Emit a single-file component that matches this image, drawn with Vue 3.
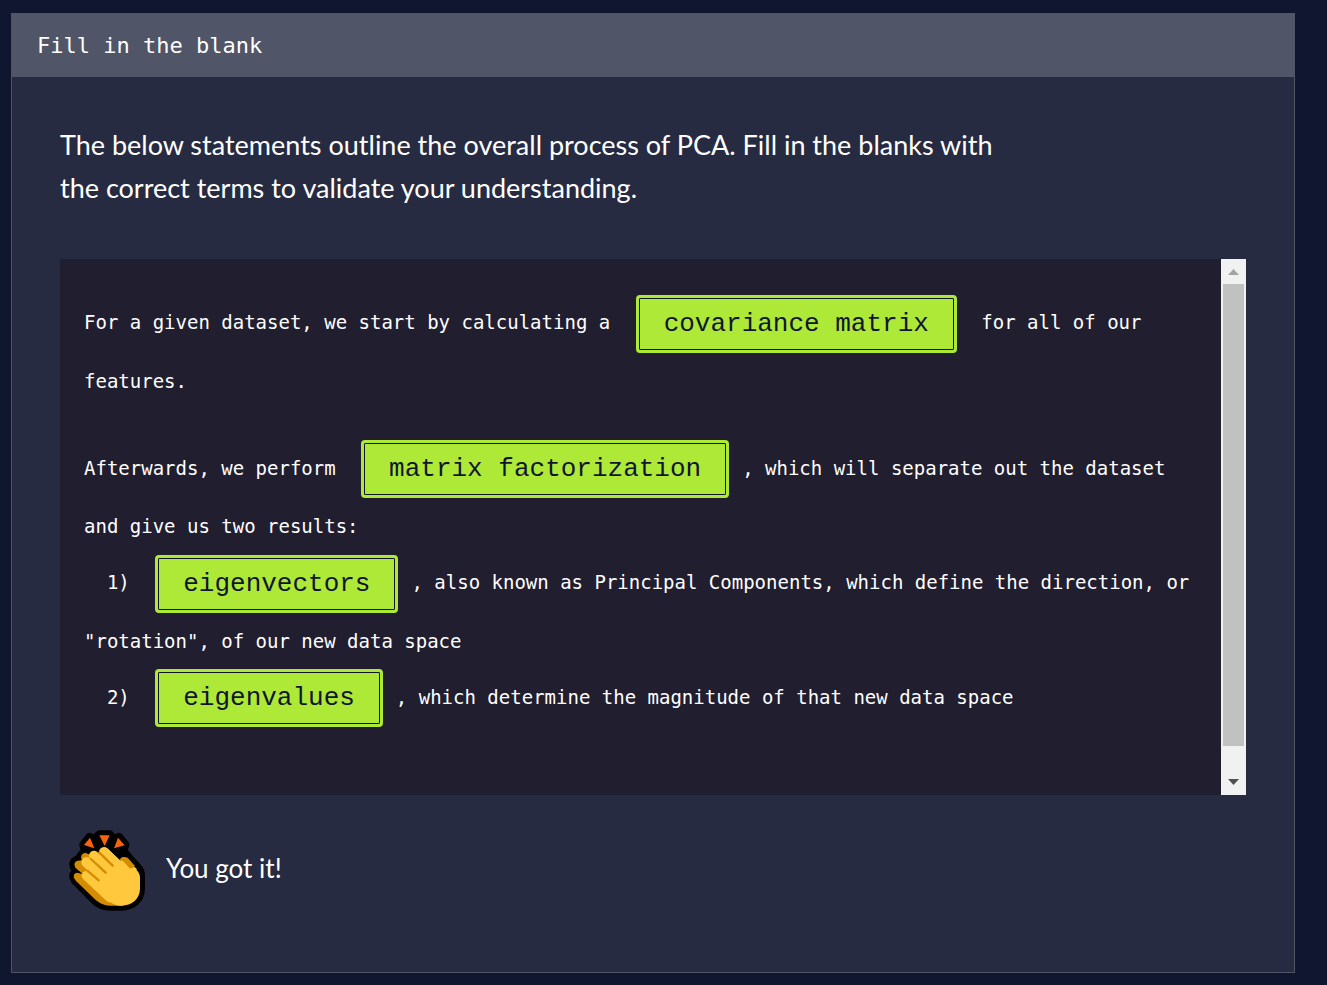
<script setup>
const lines = [
  [
    { text: 'For a given dataset, we start by calculating a ' },
    { blank: 'covariance matrix' },
    { text: ' for all of our features.' }
  ],
  [
    { text: 'Afterwards, we perform ' },
    { blank: 'matrix factorization' },
    { text: ', which will separate out the dataset and give us two results:' }
  ],
  [
    { text: '  1) ' },
    { blank: 'eigenvectors' },
    { text: ', also known as Principal Components, which define the direction, or "rotation", of our new data space' }
  ],
  [
    { text: '  2) ' },
    { blank: 'eigenvalues' },
    { text: ', which determine the magnitude of that new data space' }
  ]
]
</script>

<template>
  <main class="page">
    <section class="card" aria-labelledby="card-title">
      <h1 id="card-title" class="title">Fill in the blank</h1>
      <div class="body">
        <p class="prompt">The below statements outline the overall process of PCA. Fill in the blanks with the correct terms to validate your understanding.</p>

        <div class="editor">
          <div class="code">
            <p v-for="(line, i) in lines" :key="i" class="line" :class="{ spaced: i === 0 }"><template v-for="(part, j) in line" :key="j"><button v-if="part.blank" type="button" class="chip">{{ part.blank }}</button><template v-else>{{ part.text }}</template></template></p>
          </div>
          <div class="scrollbar" aria-hidden="true">
            <svg class="arrow up" viewBox="0 0 25 25"><path d="M7 16 12.500 10 18 16Z" /></svg>
            <div class="track"><div class="thumb"></div></div>
            <svg class="arrow down" viewBox="0 0 25 25"><path d="M7 9H18L12.500 15Z" /></svg>
          </div>
        </div>

        <div class="result">
          <svg class="clap" viewBox="27 30 228 243" aria-hidden="true">
            <path class="outline" d="M73 75 90 54 104 62 119 46H148L160 62 176 54 193 75 186 92 208 119 230 143Q240 152 240 166V205C240 238 216 257 184 257H149Q125 257 107 241L48 181Q36 164 50 160L48 146Q36 128 52 122L64 119Q60 105 80 98Z" />
            <path class="spark" d="M72 75 90 53 103 85ZM118 46H149L134 78ZM174 53 194 76 162 85Z" />
            <path class="shade" d="M42 174Q38 160 52 158L68 162 46 143Q38 126 53 122L66 121Q57 103 76 98L90 104 200 190 190 257H149Q128 257 108 241L48 183ZM180 120Q186 106 203 113L225 138 209 148Z" />
            <path class="finger" d="M132 96 200 162M102 107 170 175M79 127 150 198M80 167 150 232" />
            <path class="skin" d="M142 85 210 149 214 145 230 151Q240 160 240 174V205C240 238 216 257 184 257Q162 257 146 242L100 165 118 100Z" />
            <path class="skin" d="M184 120Q191 115 198 121L230 146V170H204L170 130Z" />
            <path class="crease" d="M93 117 137 158M118 98 158 137M82 152 116 181" />
            <path class="fold" d="M180 117Q190 106 201 116L224 141 210 146 194 128Q188 121 179 121Z" />
          </svg>
          <p class="message">You got it!</p>
        </div>
      </div>
    </section>
  </main>
</template>

<style>
body {
  margin: 0;
  background: #10162f;
}
</style>

<style scoped>
.page {
  box-sizing: border-box;
  min-height: 100vh;
  padding: 13px 32px 12px 11px;
  background: #10162f;
  color: #fff;
  display: flex;
}
.card {
  flex: 1;
  min-width: 0;
  border: 1px solid #505567;
  background: #272b41;
}
.title {
  margin: 0;
  padding: 0 25px;
  background: #505567;
  font: 400 22px/63px "DejaVu Sans Mono", "Liberation Mono", monospace;
}
.body {
  padding: 46px 48px 48px;
}
.prompt {
  max-width: 960px;
  margin: 0 0 50px;
  font: 400 27px/43px Lato, "Open Sans", sans-serif;
}
.editor {
  display: flex;
  background: #211e2f;
}
.code {
  flex: 1;
  min-width: 0;
  padding: 35px 24px 68px;
}
.line {
  margin: 0;
  white-space: pre-wrap;
  font: 400 19px/56px "DejaVu Sans Mono", "Liberation Mono", monospace;
}
.spaced {
  margin-bottom: 31px;
}
.chip {
  box-sizing: border-box;
  height: 58px;
  margin: 0 13px 0 14px;
  padding: 0 25px;
  border: 3px solid #aee938;
  border-radius: 4px;
  background: #aee938;
  box-shadow: inset 0 0 0 1px #10162f;
  color: #10162f;
  font: 400 26px/52px "Liberation Mono", monospace;
  vertical-align: middle;
}
.scrollbar {
  width: 25px;
  display: flex;
  flex-direction: column;
  background: #f1f1f1;
}
.arrow {
  width: 25px;
  height: 25px;
}
.up {
  fill: #a3a3a3;
}
.down {
  fill: #505050;
}
.track {
  flex: 1;
  display: flex;
  padding: 0 2px;
}
.thumb {
  flex: 1;
  height: 95%;
  background: #c1c1c1;
}
.result {
  display: flex;
  align-items: center;
  gap: 21px;
  padding: 35px 9px 0;
}
.clap {
  width: 76px;
  height: 81px;
}
.outline {
  fill: #000;
  stroke: #000;
  stroke-width: 30px;
  stroke-linejoin: round;
}
.spark {
  fill: #f7630c;
}
.shade {
  fill: #d48c00;
}
.skin {
  fill: #ffc83d;
}
.finger {
  fill: none;
  stroke: #ffc83d;
  stroke-width: 30px;
  stroke-linecap: round;
}
.crease {
  fill: none;
  stroke: #d48c00;
  stroke-width: 7px;
  stroke-linecap: round;
}
.fold {
  fill: #d48c00;
}
.message {
  margin: 0 0 4px;
  font: 400 26px/43px Lato, "Open Sans", sans-serif;
}
</style>
